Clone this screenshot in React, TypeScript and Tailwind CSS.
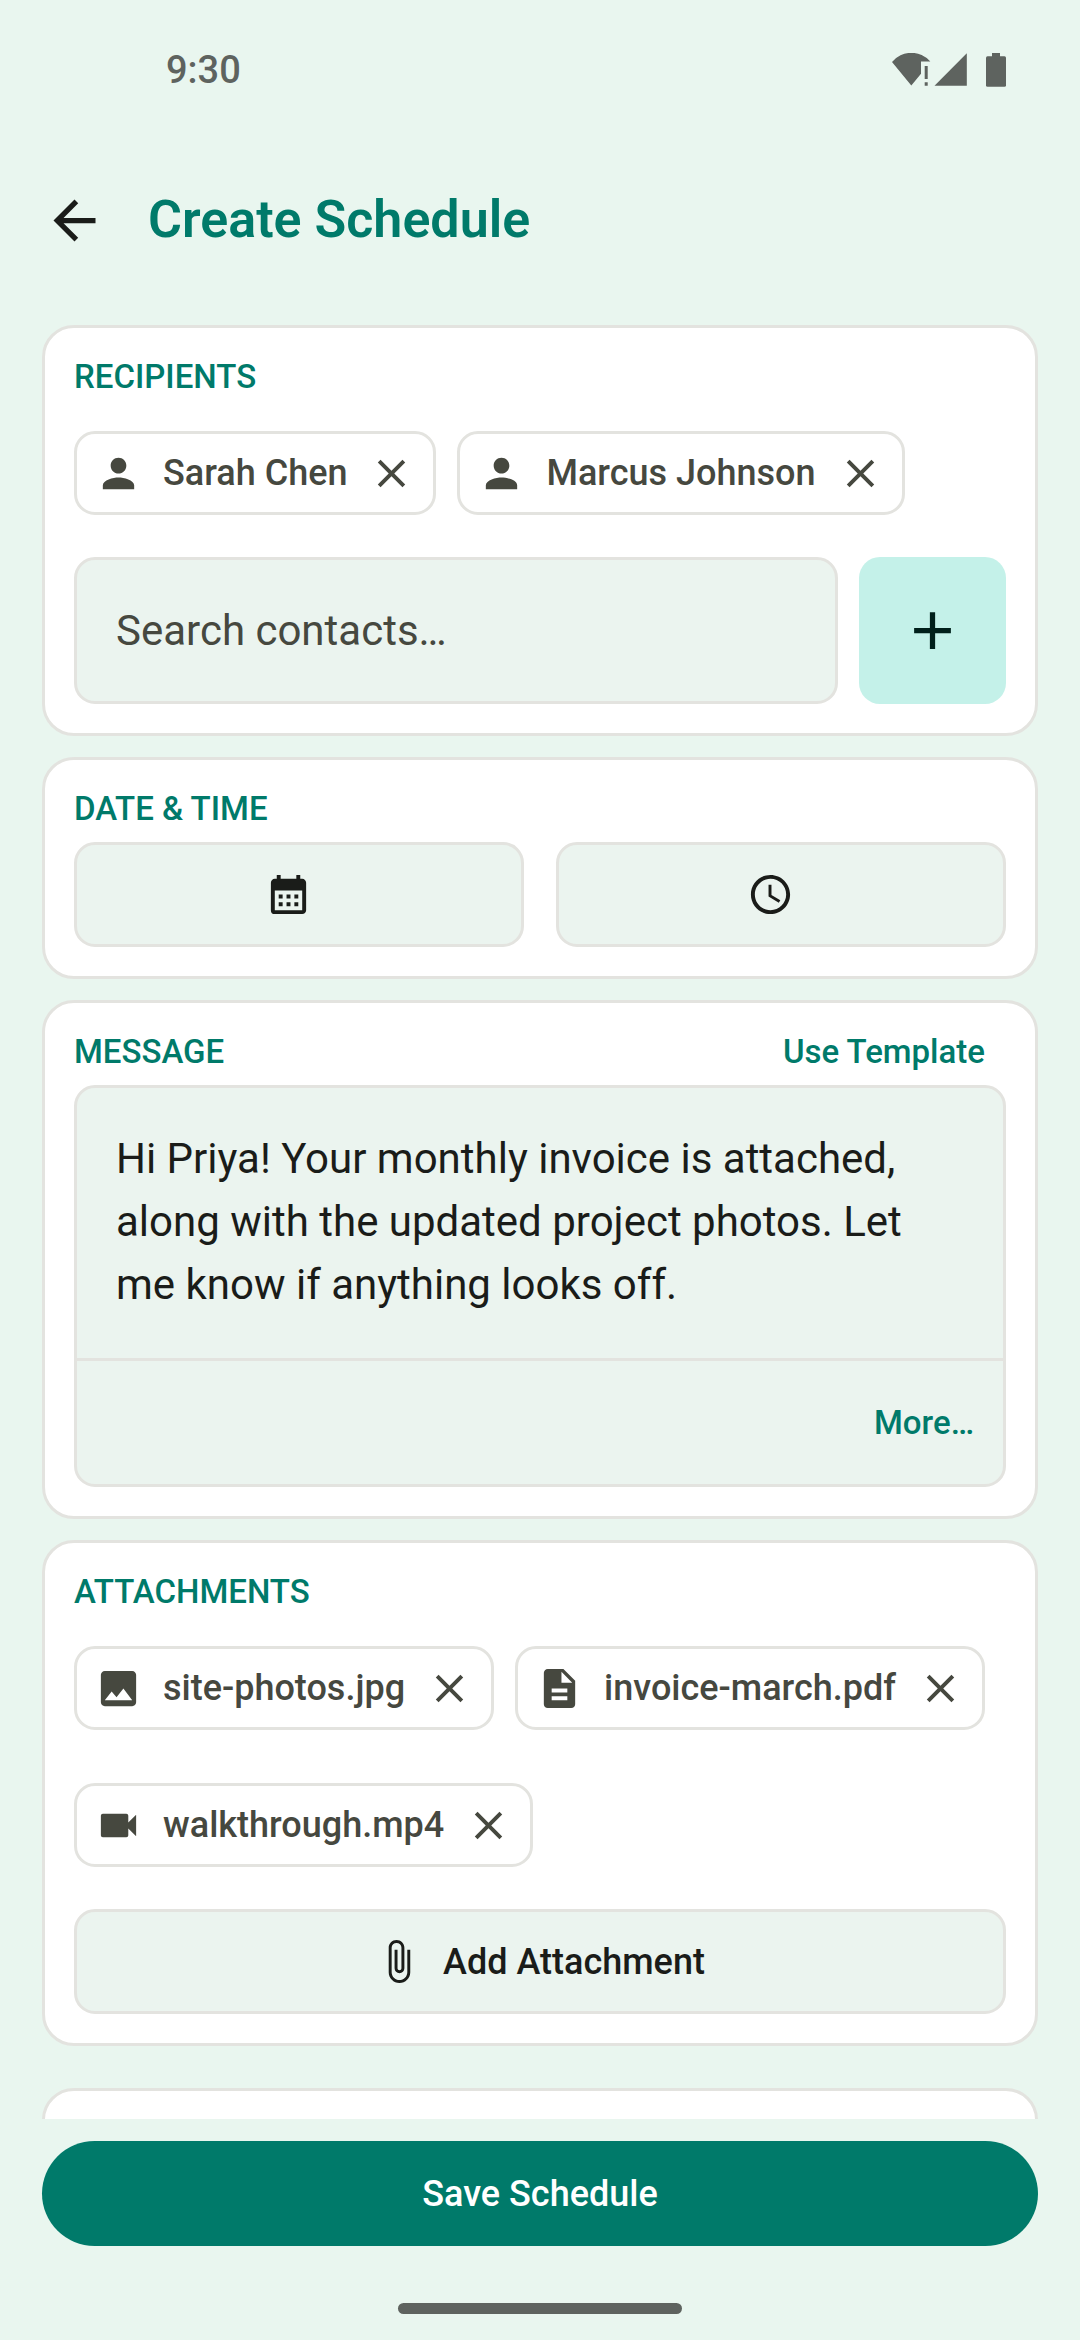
import React from "react";
import type { IconType } from "react-icons";
import {
  MdAdd,
  MdArrowBack,
  MdAttachFile,
  MdCalendarMonth,
  MdClose,
  MdDescription,
  MdImage,
  MdPerson,
  MdSchedule,
  MdVideocam,
} from "react-icons/md";

type ChipData = { label: string; icon: IconType };

const recipients: ChipData[] = [
  { label: "Sarah Chen", icon: MdPerson },
  { label: "Marcus Johnson", icon: MdPerson },
];

const attachments: ChipData[] = [
  { label: "site-photos.jpg", icon: MdImage },
  { label: "invoice-march.pdf", icon: MdDescription },
  { label: "walkthrough.mp4", icon: MdVideocam },
];

const defaultMessage =
  "Hi Priya! Your monthly invoice is attached,\nalong with the updated project photos. Let\nme know if anything looks off.";

const labelStyle =
  "text-[33px] leading-[40px] font-medium text-[#007a6a] uppercase";
const linkStyle = "text-[33px] leading-[40px] font-medium text-[#007a6a]";
const fieldStyle =
  "rounded-[21px] border-3 border-[#e3e3df] bg-[#ebf4ef] text-[#1a1c19]";

const StatusBar: React.FC = () => (
  <div className="flex h-[136px] items-center justify-between pt-1 pr-[74px] pl-[166px] text-[#5e635f]">
    <span className="text-[38px] leading-[42px] font-medium">9:30</span>
    <svg width="114" height="34" viewBox="0 0 114 34" fill="currentColor">
      <path d="M0 9A25 25 0 0 1 38.3 8.5H29V20.8L19.3 32.4Z" />
      <path d="M32.7 13h3v13h-3zM32.7 29.3h3v3.4h-3z" />
      <path d="M42.5 32.7L74.8 0.3V32.7Z" />
      <rect x="94" y="3.3" width="20" height="30.400" rx="1.5" />
      <rect x="100" width="8" height="4" />
    </svg>
  </div>
);

const Card: React.FC<{ children?: React.ReactNode }> = ({ children }) => (
  <section className="rounded-[32px] border-3 border-[#e3e3df] bg-white p-[29px]">
    {children}
  </section>
);

const Chip: React.FC<{ chip: ChipData }> = ({ chip }) => {
  const Icon = chip.icon;
  return (
    <li className="flex h-[84px] items-center gap-[21px] rounded-[21px] border-3 border-[#e3e3df] px-[18px] text-[#46483f]">
      <Icon size={47} />
      <span className="text-[36px] leading-[54px] font-medium whitespace-nowrap">
        {chip.label}
      </span>
      <button type="button" aria-label={`Remove ${chip.label}`}>
        <MdClose size={47} />
      </button>
    </li>
  );
};

const ChipList: React.FC<{ chips: ChipData[] }> = ({ chips }) => (
  <ul className="mt-[34px] mb-[42px] flex flex-wrap gap-x-[21px] gap-y-[53px]">
    {chips.map((chip) => (
      <Chip key={chip.label} chip={chip} />
    ))}
  </ul>
);

const PickerButton: React.FC<{ label: string; icon: IconType }> = ({
  label,
  icon: Icon,
}) => (
  <button
    type="button"
    aria-label={label}
    className={`${fieldStyle} flex h-[105px] flex-1 items-center justify-center gap-[21px]`}
  >
    <Icon size={47} />
    <span />
  </button>
);

export default function App() {
  return (
    <div className="flex h-screen flex-col bg-[#e9f6ef] font-['Roboto',sans-serif]">
      <StatusBar />

      <header className="flex h-[168px] items-center gap-[42px] px-[43px]">
        <button type="button" aria-label="Back" className="text-[#1a1c19]">
          <MdArrowBack size={63} />
        </button>
        <h1 className="text-[52px] leading-[74px] font-semibold text-[#007a6a]">
          Create Schedule
        </h1>
      </header>

      <main className="flex min-h-0 flex-1 flex-col gap-[21px] overflow-y-auto px-[42px] pt-[21px] [scrollbar-width:none]">
        <Card>
          <label htmlFor="contacts" className={`${labelStyle} block`}>
            Recipients
          </label>
          <ChipList chips={recipients} />
          <div className="flex gap-[21px]">
            <input
              id="contacts"
              type="text"
              placeholder="Search contacts…"
              className={`${fieldStyle} h-[147px] min-w-0 flex-1 px-[39px] text-[42px] placeholder:text-[#46483f]`}
            />
            <button
              type="button"
              aria-label="Add contact"
              className="flex w-[147px] items-center justify-center rounded-[21px] bg-[#c4f1e9] text-[#00201b]"
            >
              <MdAdd size={63} />
            </button>
          </div>
        </Card>

        <Card>
          <h2 className={labelStyle}>Date &amp; Time</h2>
          <div className="mt-[13px] flex gap-8">
            <PickerButton label="Pick a date" icon={MdCalendarMonth} />
            <PickerButton label="Pick a time" icon={MdSchedule} />
          </div>
        </Card>

        <Card>
          <div className="flex items-center justify-between pr-[21px]">
            <label htmlFor="message" className={labelStyle}>
              Message
            </label>
            <button type="button" className={linkStyle}>
              Use Template
            </button>
          </div>
          <div className={`${fieldStyle} mt-[13px]`}>
            <textarea
              id="message"
              rows={3}
              defaultValue={defaultMessage}
              className="block w-full resize-none overflow-hidden px-[39px] pt-[39px] pb-[42px] text-[42px] leading-[63px]"
            />
            <div className="flex h-[126px] items-center justify-end border-t-3 border-[#e3e3df] px-[29px]">
              <button type="button" className={linkStyle}>
                More…
              </button>
            </div>
          </div>
        </Card>

        <Card>
          <h2 className={labelStyle}>Attachments</h2>
          <ChipList chips={attachments} />
          <button
            type="button"
            className={`${fieldStyle} flex h-[105px] w-full items-center justify-center gap-[21px] text-[36px] font-medium`}
          >
            <MdAttachFile size={47} />
            Add Attachment
          </button>
        </Card>

        <div className="mt-[21px]">
          <Card />
        </div>
      </main>

      <footer className="px-[42px] pt-[22px] pb-[26px]">
        <button
          type="button"
          className="h-[105px] w-full rounded-full bg-[#007a6a] text-[36px] font-medium text-white"
        >
          Save Schedule
        </button>
        <div className="mx-auto mt-[57px] h-[11px] w-[284px] rounded-full bg-[#5e635f]" />
      </footer>
    </div>
  );
}
